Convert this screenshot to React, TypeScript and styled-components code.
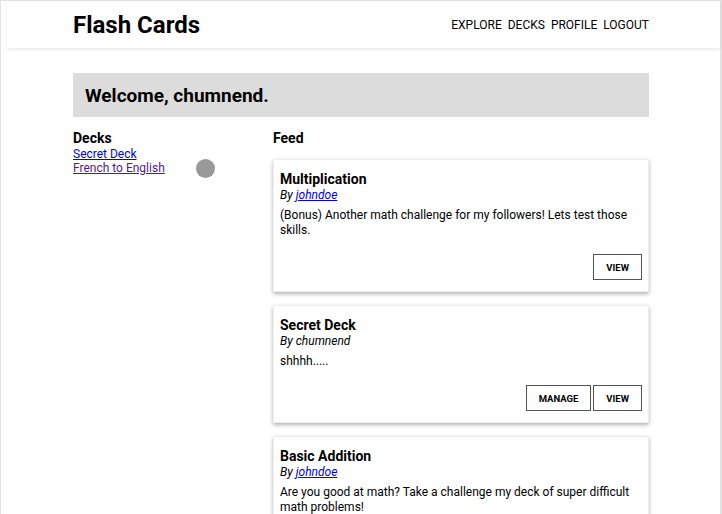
import React from "react";
import styled, { createGlobalStyle } from "styled-components";

const GlobalStyle = createGlobalStyle`
  html, body {
    margin: 0;
    padding: 0;
    background: #fff;
    font-family: Roboto, "Liberation Sans", sans-serif;
    color: #000;
  }
`;

const Frame = styled.div`
  min-height: 100vh;
  box-sizing: border-box;
  border: 1px solid #e2e2e2;
  border-right-width: 2px;
  border-bottom: none;
`;

const Header = styled.header`
  height: 47px;
  margin-left: 6px;
  box-shadow: 0 2px 3px rgba(0, 0, 0, 0.08);
`;

const Container = styled.div`
  width: 576px;
  margin: 0 auto;
  padding-left: 1px;
`;

const HeaderInner = styled.div`
  height: 100%;
  width: 576px;
  display: flex;
  align-items: center;
  justify-content: space-between;
  margin-left: 66px;
`;

const Brand = styled.h1`
  margin: 0;
  font-size: 24px;
  font-weight: 700;
`;

const Nav = styled.nav`
  display: flex;
  gap: 6px;
  font-size: 12px;
`;

const NavLink = styled.a`
  color: #000;
  text-decoration: none;
`;

const Welcome = styled.div`
  margin-top: 25px;
  height: 44px;
  background: #dcdcdc;
  display: flex;
  align-items: center;
  padding: 0 12px;
  font-size: 19px;
  font-weight: 700;
`;

const Columns = styled.div`
  display: grid;
  grid-template-columns: 200px 1fr;
  margin-top: 12px;
`;

const SideHeading = styled.h3`
  margin: 0;
  font-size: 14px;
  font-weight: 700;
  line-height: 18px;
`;

const Side = styled.div`
  display: flex;
  flex-direction: column;
  position: relative;
`;

const DeckLink = styled.a<{ $visited?: boolean }>`
  font-size: 12px;
  line-height: 14px;
  color: ${(p) => (p.$visited ? "#551a8b" : "#0000ee")};
  text-decoration: underline;
  width: fit-content;
`;

const Dot = styled.span`
  position: absolute;
  left: 123px;
  top: 30px;
  width: 19px;
  height: 19px;
  border-radius: 50%;
  background: #999;
`;

const Feed = styled.div`
  display: flex;
  flex-direction: column;
  gap: 13px;
  margin-top: 12px;
`;

const Card = styled.div`
  border: 1px solid #eee;
  box-shadow: 0 2px 4px rgba(0, 0, 0, 0.3);
  padding: 11px 6px 11px 6px;
  display: flex;
  flex-direction: column;
`;

const CardTitle = styled.h4`
  margin: 0;
  font-size: 14px;
  font-weight: 700;
  line-height: 16px;
`;

const Author = styled.div`
  font-size: 12px;
  font-style: italic;
  line-height: 16px;
  a {
    color: #0000ee;
  }
`;

const Desc = styled.p`
  margin: 5px 0 0;
  font-size: 12px;
  line-height: 15px;
`;

const Actions = styled.div`
  display: flex;
  justify-content: flex-end;
  gap: 2px;
  margin-top: 16px;
`;

const Button = styled.button`
  background: #fff;
  border: 1px solid #555;
  font-family: Roboto, "Liberation Sans", sans-serif;
  font-weight: 700;
  font-size: 9.5px;
  height: 26px;
  padding: 0 12px;
  text-transform: uppercase;
  color: #000;
`;

type Deck = {
  title: string;
  author: string;
  linked: boolean;
  desc: string;
  own?: boolean;
};

const feed: Deck[] = [
  {
    title: "Multiplication",
    author: "johndoe",
    linked: true,
    desc: "(Bonus) Another math challenge for my followers! Lets test those skills.",
  },
  { title: "Secret Deck", author: "chumnend", linked: false, desc: "shhhh.....", own: true },
  {
    title: "Basic Addition",
    author: "johndoe",
    linked: true,
    desc: "Are you good at math? Take a challenge my deck of super difficult math problems!",
  },
];

export default function App() {
  return (
    <Frame>
      <GlobalStyle />
      <Header>
        <HeaderInner>
          <Brand>Flash Cards</Brand>
          <Nav>
            <NavLink href="#">EXPLORE</NavLink>
            <NavLink href="#">DECKS</NavLink>
            <NavLink href="#">PROFILE</NavLink>
            <NavLink href="#">LOGOUT</NavLink>
          </Nav>
        </HeaderInner>
      </Header>
      <Container>
        <Welcome>Welcome, chumnend.</Welcome>
        <Columns>
          <Side>
            <SideHeading>Decks</SideHeading>
            <DeckLink href="#">Secret Deck</DeckLink>
            <DeckLink href="#" $visited>
              French to English
            </DeckLink>
            <Dot />
          </Side>
          <div>
            <SideHeading>Feed</SideHeading>
            <Feed>
              {feed.map((d) => (
                <Card key={d.title}>
                  <CardTitle>{d.title}</CardTitle>
                  <Author>
                    By {d.linked ? <a href="#">{d.author}</a> : d.author}
                  </Author>
                  <Desc>{d.desc}</Desc>
                  <Actions>
                    {d.own && <Button>Manage</Button>}
                    <Button>View</Button>
                  </Actions>
                </Card>
              ))}
            </Feed>
          </div>
        </Columns>
      </Container>
    </Frame>
  );
}
